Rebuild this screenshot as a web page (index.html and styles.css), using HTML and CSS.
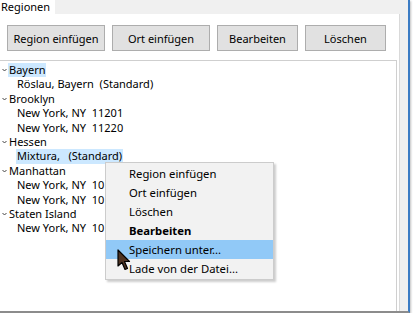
FILE: index.html
```html
<!DOCTYPE html>
<html lang="de">
<head>
  <meta charset="UTF-8">
  <title>Regionen</title>
  <link rel="stylesheet" href="styles.css">
</head>
<body>
  <div class="window">
    <div class="tabs">
      <div class="tab">Regionen</div>
    </div>

    <div class="panel">
      <div class="toolbar">
        <button class="btn btn-wide">Region einfügen</button>
        <button class="btn btn-wide">Ort einfügen</button>
        <button class="btn">Bearbeiten</button>
        <button class="btn">Löschen</button>
      </div>

      <div class="tree">
        <div class="node"><span class="chev"><svg width="5" height="4" viewBox="0 0 5 4"><path d="M0.5 1 L2.5 3 L4.5 1" fill="none" stroke="#444" stroke-width="1"/></svg></span><span class="label sel">Bayern</span></div>
        <div class="leaf"><span class="label">Röslau, Bayern&nbsp; (Standard)</span></div>
        <div class="node"><span class="chev"><svg width="5" height="4" viewBox="0 0 5 4"><path d="M0.5 1 L2.5 3 L4.5 1" fill="none" stroke="#444" stroke-width="1"/></svg></span><span class="label">Brooklyn</span></div>
        <div class="leaf"><span class="label">New York, NY&nbsp; 11201</span></div>
        <div class="leaf"><span class="label">New York, NY&nbsp; 11220</span></div>
        <div class="node"><span class="chev"><svg width="5" height="4" viewBox="0 0 5 4"><path d="M0.5 1 L2.5 3 L4.5 1" fill="none" stroke="#444" stroke-width="1"/></svg></span><span class="label">Hessen</span></div>
        <div class="leaf"><span class="label sel">Mixtura,&nbsp;&nbsp; (Standard)</span></div>
        <div class="node"><span class="chev"><svg width="5" height="4" viewBox="0 0 5 4"><path d="M0.5 1 L2.5 3 L4.5 1" fill="none" stroke="#444" stroke-width="1"/></svg></span><span class="label">Manhattan</span></div>
        <div class="leaf"><span class="label">New York, NY&nbsp; 10</span></div>
        <div class="leaf"><span class="label">New York, NY&nbsp; 10</span></div>
        <div class="node"><span class="chev"><svg width="5" height="4" viewBox="0 0 5 4"><path d="M0.5 1 L2.5 3 L4.5 1" fill="none" stroke="#444" stroke-width="1"/></svg></span><span class="label">Staten Island</span></div>
        <div class="leaf"><span class="label">New York, NY&nbsp; 10</span></div>
      </div>
    </div>
  </div>

  <div class="menu">
    <div class="item">Region einfügen</div>
    <div class="item">Ort einfügen</div>
    <div class="item">Löschen</div>
    <div class="item item-bold">Bearbeiten</div>
    <div class="item item-hover">Speichern unter...</div>
    <div class="item">Lade von der Datei...</div>
  </div>

  <svg class="cursor" width="14" height="22" viewBox="0 0 14 22">
    <path d="M1 1 L1 17 L5 13.5 L8 20.5 L10.5 19.5 L7.5 12.5 L12.5 12.5 Z" fill="#4e3322" stroke="#000" stroke-width="1.2" stroke-linejoin="round"/>
  </svg>
</body>
</html>
```

FILE: styles.css
```css
body {
  margin: 0;
  background-color: #FFFFFF;
  font-family: 'Noto Sans', 'Open Sans', sans-serif;
  font-size: 11px;
  color: #000;
}

.window {
  width: 408px;
  height: 311px;
  background-color: #F0F0F0;
  border-right: 2px solid #3B7CC4;
  border-bottom: 2px solid #8C8C8C;
  box-shadow: 1px 1px 2px rgba(0, 0, 0, 0.25);
  display: flex;
  flex-direction: column;
}

.tabs {
  height: 14px;
  display: flex;
}

.tab {
  width: 54px;
  background-color: #FFFFFF;
  line-height: 14px;
  padding-left: 1px;
}

.panel {
  flex: 1;
  margin-right: 8px;
  background-color: #FFFFFF;
  border-right: 1px solid #D9D9D9;
  display: flex;
  flex-direction: column;
}

.toolbar {
  display: flex;
  gap: 7px;
  padding: 11px 0 0 7px;
  height: 26px;
}

.btn {
  height: 26px;
  width: 81px;
  padding: 0;
  background-color: #E1E1E1;
  border: 1px solid #ADADAD;
  font-family: inherit;
  font-size: 11px;
  color: #000;
}

.btn-wide {
  width: 98px;
}

.tree {
  flex: 1;
  margin-top: 9px;
  margin-right: 2px;
  border-top: 1px solid #CFCFCF;
  border-right: 1px solid #CFCFCF;
  padding-top: 2px;
}

.node,
.leaf {
  height: 14.4px;
  line-height: 14.4px;
  display: flex;
  align-items: center;
  white-space: nowrap;
}

.node {
  padding-left: 2px;
}

.leaf {
  padding-left: 16px;
}

.chev {
  width: 5px;
  margin-right: 1px;
  display: flex;
  align-items: center;
}

.label {
  padding: 0 1px;
}

.label.sel {
  background-color: #CCE8FF;
}

.menu {
  position: absolute;
  left: 105px;
  top: 162px;
  width: 167px;
  padding: 1px 0 1px 0;
  background-color: #F2F2F2;
  border: 1px solid #CCCCCC;
  box-shadow: 2px 2px 2px rgba(0, 0, 0, 0.2);
  font-size: 11.3px;
}

.item {
  height: 19px;
  line-height: 19px;
  padding-left: 23px;
}

.item-bold {
  font-weight: bold;
}

.item-hover {
  background-color: #91C9F7;
}

.cursor {
  position: absolute;
  left: 117px;
  top: 249px;
}
```
